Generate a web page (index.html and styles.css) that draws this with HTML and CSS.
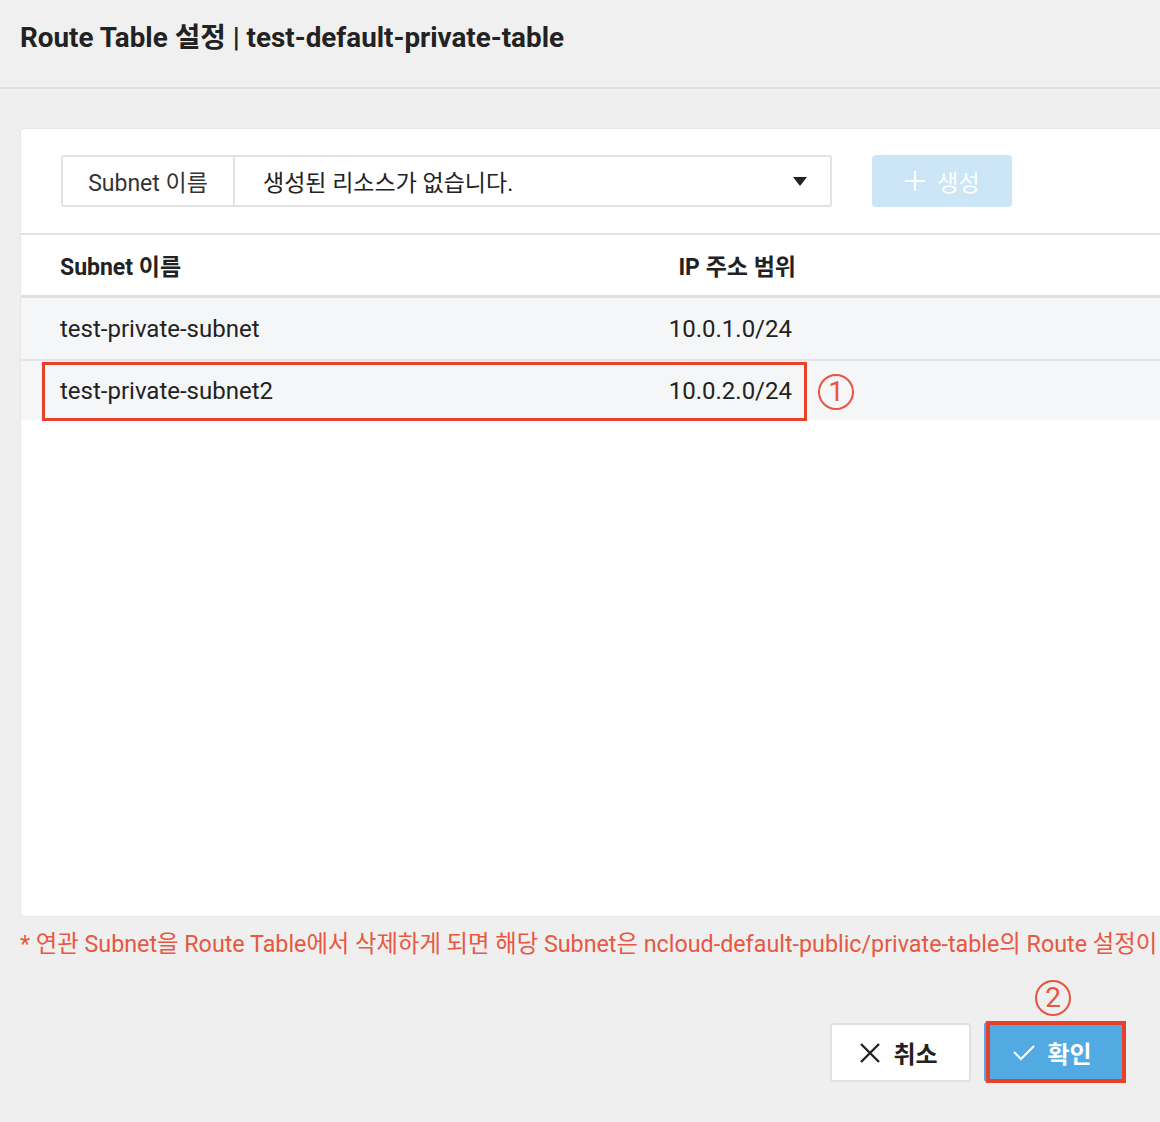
FILE: index.html
```html
<!DOCTYPE html>
<html lang="ko">
<head>
<meta charset="utf-8">
<title>Route Table 설정</title>
<link rel="stylesheet" href="styles.css">
</head>
<body>
<header class="modal-head">
  <h1 class="modal-title">Route Table 설정 | test-default-private-table</h1>
</header>
<main class="modal-body">
  <section class="card">
    <div class="filter-row">
      <div class="filter">
        <div class="filter-label">Subnet 이름</div>
        <div class="filter-select">
          <span>생성된 리소스가 없습니다.</span>
          <span class="caret"></span>
        </div>
      </div>
      <button class="btn-create" disabled>
        <svg class="plus" width="22" height="22" viewBox="0 0 22 22"><path d="M11 1v20M1 11h20" stroke="#fff" stroke-width="2.2" fill="none"/></svg>
        <span>생성</span>
      </button>
    </div>
    <div class="table">
      <div class="tr th">
        <div class="td name">Subnet 이름</div>
        <div class="td ip">IP 주소 범위</div>
      </div>
      <div class="tr row">
        <div class="td name">test-private-subnet</div>
        <div class="td ip val">10.0.1.0/24</div>
      </div>
      <div class="tr row last">
        <div class="td name">test-private-subnet2</div>
        <div class="td ip val">10.0.2.0/24</div>
        <div class="mark-box"></div>
        <div class="mark-num num1">1</div>
      </div>
    </div>
  </section>
  <p class="warn">* 연관 Subnet을 Route Table에서 삭제하게 되면 해당 Subnet은 ncloud-default-public/private-table의 Route 설정이 적용됩니다.</p>
  <div class="actions">
    <button class="btn-cancel">
      <svg width="22" height="22" viewBox="0 0 22 22"><path d="M2 2l18 18M20 2L2 20" stroke="#222" stroke-width="2.4" fill="none"/></svg>
      <span>취소</span>
    </button>
    <div class="ok-wrap">
      <div class="mark-num num2">2</div>
      <button class="btn-ok">
        <svg width="24" height="20" viewBox="0 0 24 20"><path d="M2 10l7 7L22 4" stroke="#fff" stroke-width="2" fill="none"/></svg>
        <span>확인</span>
      </button>
      <div class="ok-box"></div>
    </div>
  </div>
</main>
</body>
</html>
```

FILE: styles.css
```css
* { box-sizing: border-box; }
html, body {
  margin: 0;
  padding: 0;
  background: #efefef;
  overflow: hidden;
  font-family: Roboto, "Noto Sans CJK KR", "Noto Sans", sans-serif;
  color: #222;
}
.modal-head {
  height: 89px;
  background: #f0f0f0;
  border-bottom: 2px solid #e1e1e1;
  padding: 20px 20px 0;
}
.modal-title {
  margin: 0;
  font-size: 27.8px;
  line-height: 36px;
  font-weight: 700;
  color: #222;
}
.modal-body {
  padding-top: 39px;
}
.card {
  margin-left: 20px;
  width: 1160px;
  height: 789px;
  background: #fff;
  border: 1px solid #e6e6e6;
  border-radius: 4px;
}
.filter-row {
  display: flex;
  align-items: flex-start;
  gap: 40px;
  padding: 26px 0 0 40px;
  height: 104px;
}
.filter {
  display: flex;
  width: 771px;
  height: 52px;
  border: 2px solid #e3e3e3;
  border-radius: 3px;
}
.filter-label {
  width: 172px;
  border-right: 2px solid #e3e3e3;
  display: flex;
  align-items: center;
  justify-content: center;
  font-size: 23px;
  color: #333;
}
.filter-select {
  flex: 1;
  display: flex;
  align-items: center;
  justify-content: space-between;
  padding: 0 23px 0 28px;
  font-size: 23px;
  color: #222;
}
.caret {
  width: 0;
  height: 0;
  border-left: 7px solid transparent;
  border-right: 7px solid transparent;
  border-top: 9px solid #222;
}
.btn-create {
  width: 140px;
  height: 52px;
  border: none;
  border-radius: 4px;
  background: #cce5f7;
  color: #fff;
  font-family: inherit;
  font-size: 23px;
  display: flex;
  align-items: center;
  justify-content: center;
  gap: 11px;
  padding: 0;
}
.table {
  border-top: 2px solid #e2e2e2;
}
.tr {
  display: flex;
  align-items: center;
  position: relative;
}
.th {
  height: 63px;
  border-bottom: 3px solid #e1e1e1;
  font-weight: 700;
  font-size: 23px;
  color: #222;
}
.row {
  height: 63px;
  background: #f5f6f8;
  border-bottom: 2px solid #e3e4e6;
  font-size: 24px;
  color: #222;
}
.row.last {
  height: 59px;
  border-bottom: none;
}
.td.name {
  width: 600px;
  padding-left: 39px;
}
.td.ip {
  width: 175px;
  text-align: right;
}
.td.ip.val {
  padding-right: 4px;
}
.mark-box {
  position: absolute;
  left: 21px;
  top: 1px;
  width: 765px;
  height: 59px;
  border: 3px solid #e8412b;
}
.mark-num {
  position: absolute;
  width: 36px;
  height: 36px;
  border: 2px solid #e8553f;
  border-radius: 50%;
  color: #e8553f;
  font-size: 28px;
  line-height: 32px;
  text-align: center;
  font-family: Roboto, sans-serif;
}
.num1 {
  left: 797px;
  top: 13px;
}
.warn {
  margin: 12px 0 0 20px;
  white-space: nowrap;
  font-size: 23.3px;
  line-height: 30px;
  color: #e8573f;
}
.actions {
  display: flex;
  justify-content: flex-end;
  align-items: flex-start;
  gap: 13px;
  padding: 62px 34px 0 0;
}
.btn-cancel {
  margin-top: 2px;
  width: 141px;
  height: 59px;
  background: #fff;
  border: 2px solid #e1e1e1;
  border-radius: 3px;
  font-family: inherit;
  font-size: 24px;
  font-weight: 700;
  color: #222;
  display: flex;
  align-items: center;
  justify-content: center;
  gap: 12px;
  padding: 0 4px 0 0;
}
.ok-wrap {
  position: relative;
  width: 142px;
  height: 62px;
}
.btn-ok {
  position: absolute;
  left: 0;
  top: 1px;
  width: 140px;
  height: 60px;
  border: none;
  border-radius: 3px;
  background: #52aae3;
  color: #fff;
  font-family: inherit;
  font-size: 24px;
  font-weight: 700;
  display: flex;
  align-items: center;
  justify-content: center;
  gap: 11px;
  padding: 0 4px 0 0;
}
.ok-box {
  position: absolute;
  left: 2px;
  top: 0;
  width: 140px;
  height: 62px;
  border: 4px solid #e8412b;
}
.num2 {
  left: 51px;
  top: -41px;
}
```
